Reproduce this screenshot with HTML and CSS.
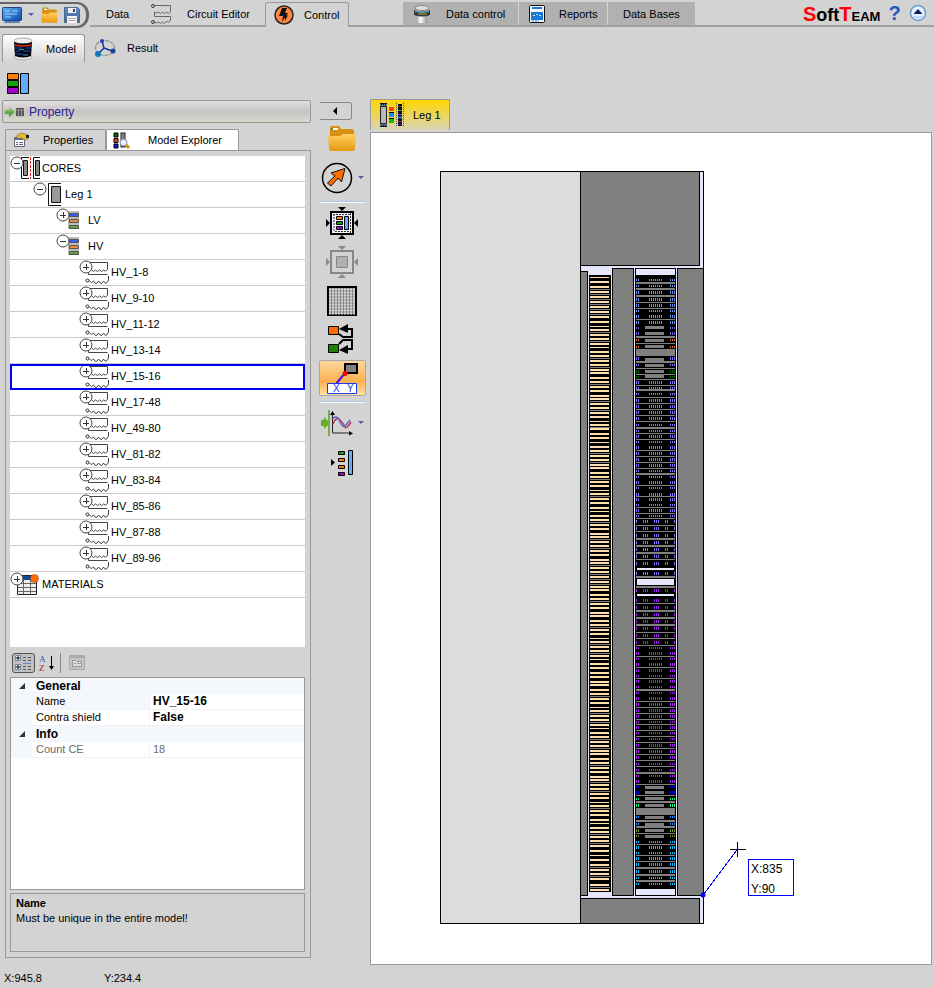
FILE: index.html
```html
<!DOCTYPE html>
<html lang="en">
<head>
<meta charset="utf-8">
<title>Transformer model</title>
<link rel="stylesheet" href="styles.css">
</head>
<body>
<svg class="defs" aria-hidden="true">
  <defs>
    <linearGradient id="gFolder" x1="0" y1="0" x2="0" y2="1"><stop offset="0" stop-color="#ffd060"/><stop offset="1" stop-color="#e59a10"/></linearGradient>
    <linearGradient id="gScreen" x1="0" y1="0" x2="1" y2="1"><stop offset="0" stop-color="#5ab4f4"/><stop offset="1" stop-color="#1248a8"/></linearGradient>
    <linearGradient id="gDisk" x1="0" y1="0" x2="0" y2="1"><stop offset="0" stop-color="#5c8cc8"/><stop offset="1" stop-color="#48648c"/></linearGradient>
    <linearGradient id="gSteel"><stop offset="0" stop-color="#888"/><stop offset=".4" stop-color="#fff"/><stop offset="1" stop-color="#777"/></linearGradient>
    <linearGradient id="gArrow" x1="0" y1="0" x2="0" y2="1"><stop offset="0" stop-color="#9cd070"/><stop offset="1" stop-color="#3f8c1c"/></linearGradient>
    <symbol id="minus" viewBox="0 0 14 14"><circle cx="7" cy="7" r="6" fill="#fff" stroke="#444"/><path d="M4 7.500h6" stroke="#333"/></symbol>
    <symbol id="plus" viewBox="0 0 14 14"><circle cx="7" cy="7" r="6" fill="#fff" stroke="#444"/><path d="M4 7.500h6M7.500 4v6" stroke="#333"/></symbol>
    <symbol id="folder" viewBox="0 0 28 28"><path d="M2 3q0-2 2-2h7l2 3h11q2 0 2 2v8H2z" fill="#d89010"/><rect x="3" y="3" width="7" height="2" fill="#fff"/><rect x="3" y="3" width="2" height="2" fill="#28a070"/><path d="M0 11h12l3-2h13l-1 15q0 2-2 2H3q-2 0-2-2z" fill="url(#gFolder)"/></symbol>
    <symbol id="winding" viewBox="0 0 31 24"><path d="M11 2.500H28.500V9.500q-2 3-4 .5q-2 3-4 0q-2 3-4 0q-2 3-4 0M9.500 11V14.500H28.500M29.500 16V20q-2.500 6-5 1q-2.500 5-5 0q-2.500 5-5 0q-2 3-4 0" fill="none" stroke="#444"/><circle cx="8.500" cy="20.500" r="1.500" fill="#fff" stroke="#222"/><use href="#plus" width="14" height="14"/></symbol>
    <symbol id="bars" viewBox="0 0 31 24"><rect x="12" y="3" width="11" height="18" fill="#bbb"/><path d="M13.500 5.500h9v3h-9z" fill="#3c5cf0" stroke="#555"/><path d="M13.500 11.500h9v3h-9z" fill="#f08c40" stroke="#555"/><path d="M13.500 17.500h9v3h-9z" fill="#5ca040" stroke="#555"/></symbol>
    <symbol id="drop" viewBox="0 0 6 4"><path d="M0 0h6L3 3z" fill="#5560a8"/></symbol>
  </defs>
</svg>

<header class="ribbon">
  <div class="quick">
    <button aria-label="View"><svg width="20" height="20"><rect x="0.500" y="2.500" width="19" height="13" rx="1" fill="url(#gScreen)" stroke="#1c4484"/><path d="M3 6h5M3 9h12M3 12h6M10 6h6" stroke="#a0d8ff"/><path d="M3 16h14l1 2H2z" fill="#5c80b0"/></svg></button>
    <button aria-label="View options"><svg width="6" height="4"><use href="#drop"/></svg></button>
    <button class="folder-btn" aria-label="Open"><svg width="17" height="17"><use href="#folder"/></svg></button>
    <button aria-label="Save"><svg width="16" height="17"><path d="M.5.500h13l2 2v13H.5z" fill="url(#gDisk)" stroke="#4a6890"/><path d="M4 1h8v5H4z" fill="#eee"/><path d="M9 2h2v3H9z" fill="#446"/><path d="M3 9h10v7H3z" fill="#f4f4f4"/><path d="M4 11.500h8M4 13.500h8" stroke="#aaa"/></svg></button>
  </div>
  <nav class="tabs">
    <a class="tab data" href="#">Data</a>
    <a class="tab circuit" href="#"><svg width="22" height="20"><path d="M3 1.500H19.500V8q-2 3-4 0q-2 3-4 0q-2 3-4 0q-2 2-4 0V12.500H19.500V16q-2 4-4 1q-2 4-4 1q-2 3-4 0q-2 2-4 0" fill="none" stroke="#666"/><circle cx="2" cy="2" r="1.500" fill="#ddd" stroke="#333"/><circle cx="2" cy="18" r="1.500" fill="#ddd" stroke="#333"/></svg>Circuit Editor</a>
    <a class="tab control active" href="#"><svg width="20" height="20"><circle cx="10" cy="10" r="9" fill="#ff8840" stroke="#222" stroke-width="1.500"/><path d="M8 3h5l-2 5h3l-6 9 1-6H5z" fill="#111"/><path d="M11 11l3-1-3 6z" fill="#111"/></svg>Control</a>
    <a class="tab alt datac" href="#"><svg width="18" height="20"><path d="M4 6h10v12l2 1H2l2-1z" fill="url(#gSteel)"/><ellipse cx="9" cy="4" rx="7" ry="2.500" fill="#ddd" stroke="#888"/><path d="M1 6q8 3 16 0v5q-8 3-16 0z" fill="#2c3c44"/><path d="M2 7.500q7 2 14 0" stroke="#50b8c8" fill="none"/><path d="M5 10h9" stroke="#e09030"/></svg>Data control</a>
    <a class="tab alt reports" href="#"><svg width="17" height="20"><rect x=".5" y="1.500" width="15" height="17" rx="1" fill="#f4f4f4" stroke="#111"/><path d="M3 3h10v2H3zM2 8h12v8H2z" fill="#1878d8"/><path d="M4 11.500h2m1-1h2m1 1h2" stroke="#d0e8ff"/><path d="M3 17h7" stroke="#1878d8" stroke-dasharray="2 1"/></svg>Reports</a>
    <a class="tab alt bases" href="#">Data Bases</a>
  </nav>
  <div class="brand">
    <svg class="logo" width="77" height="24" role="img" aria-label="SoftTeam"><text x="0" y="20"><tspan class="logo-red">S</tspan><tspan class="logo-oft">oft</tspan><tspan class="logo-red">T</tspan><tspan class="logo-eam">EAM</tspan></text></svg>
    <button class="help" aria-label="Help">?</button>
    <button aria-label="Collapse ribbon"><svg width="18" height="18"><circle cx="9" cy="9" r="7.500" fill="#e4f4ff" stroke="#6c98c8" stroke-width="1.500"/><path d="M9 5l4.500 5h-9z" fill="#102060"/><path d="M4 12q5 3 10 0" fill="none" stroke="#b0d8f4" stroke-width="2"/></svg></button>
  </div>
</header>

<nav class="subtabs">
  <a class="subtab active" href="#"><svg width="24" height="24"><ellipse cx="12" cy="4" rx="9" ry="3" fill="#eee" stroke="#aaa"/><ellipse cx="12" cy="20" rx="9" ry="3" fill="#eee" stroke="#aaa"/><path d="M3 5q9 3 18 0l-1 14q-8 3-16 0z" fill="#050510"/><path d="M4 8q8 2 16 0" stroke="#e02818" fill="none" stroke-width="1.500"/><path d="M4 11h7m4 0h5M5 14h4m3 0h7M4 17h8" stroke="#1850c0"/><path d="M8 12.500h5M12 18h5" stroke="#20a0c0"/></svg>Model</a>
  <a class="subtab" href="#"><svg width="22" height="20"><ellipse cx="11" cy="10" rx="9.500" ry="7.500" fill="none" stroke="#999" stroke-width="1.500" stroke-dasharray="4 1"/><path d="M8 3l2 7-6 6M10 10l8 3" stroke="#1838a0" fill="none" stroke-width="1.500"/><circle cx="8" cy="3" r="2" fill="#2040c0"/><circle cx="4" cy="16" r="3" fill="#1878b8"/><circle cx="19" cy="13" r="2.500" fill="#2040a0"/></svg>Result</a>
</nav>

<div class="commands">
  <button aria-label="Build model"><svg width="24" height="23"><path d="M1.500 1.500h11v6h-11z" fill="#ff8000" stroke="#000"/><path d="M1.500 8.500h11v6h-11z" fill="#10a010" stroke="#000"/><path d="M1.500 15.500h11v6h-11z" fill="#a000c8" stroke="#000"/><path d="M14.500 1.500h8v20h-8z" fill="#64acff" stroke="#000"/></svg></button>
</div>

<main class="workspace">
  <aside class="side">
    <h2 class="side-title"><svg width="20" height="12"><path d="M0 4h4V1l6 5-6 5V8H0z" fill="url(#gArrow)"/><path d="M11 2h8v8h-8z" fill="#555"/><path d="M11 4h8M13.500 4v7M16.500 4v7" stroke="#999"/></svg>Property</h2>
    <nav class="side-tabs">
      <a class="side-tab" href="#"><svg width="18" height="17"><path d="M2.500 5.500h10v9h-10z" fill="#fff" stroke="#667"/><path d="M3 6h9v2H3z" fill="#4868b8"/><path d="M4 10.500h2m1 0h4M4 12.500h2m1 0h4" stroke="#668"/><path d="M5 3l5-2 6 2v4l-4 1-3-2-4 1z" fill="#e0bc30" stroke="#665510" stroke-width=".5"/><path d="M14 3h3v3h-3z" fill="#222"/></svg>Properties</a>
      <a class="side-tab active" href="#"><svg width="18" height="17"><rect x="8" y="1" width="4" height="14" fill="#888" stroke="#222"/><path d="M1 1h4v4H1z" fill="#106010" stroke="#000"/><path d="M1 6.500h4v4H1z" fill="#f04020" stroke="#000"/><path d="M1 12h4v4H1z" fill="#1010f0" stroke="#000"/><circle cx="10.500" cy="10.500" r="3.500" fill="#e4f0ff" stroke="#889"/><path d="M13 13l3 3" stroke="#d09018" stroke-width="3"/></svg>Model Explorer</a>
    </nav>
    <section class="side-body">
      <ul class="tree">
        <li><button class="node l0"><svg width="31" height="24"><path d="M19 1.500h-7.500v21H19M30 1.500h-6.500v21H30" stroke="#111" fill="none"/><path d="M13.500 4.500h4v15h-4zM25.500 4.500h4v15h-4z" fill="#888" stroke="#111"/><path d="M20.500 1v22" stroke="#e02020" stroke-dasharray="3 1"/><use href="#minus" width="14" height="14"/></svg>CORES</button></li>
        <li><button class="node l1"><svg width="31" height="24"><path d="M28 1.500H15.500v22H28" stroke="#111" fill="none"/><path d="M18.500 4.500h9v16h-9z" fill="#999" stroke="#111"/><use href="#minus" width="14" height="14"/></svg>Leg 1</button></li>
        <li><button class="node l2"><svg width="31" height="24"><use href="#bars" width="31" height="24"/><use href="#plus" width="14" height="14"/></svg>LV</button></li>
        <li><button class="node l2"><svg width="31" height="24"><use href="#bars" width="31" height="24"/><use href="#minus" width="14" height="14"/></svg>HV</button></li>
        <li><button class="node l3"><svg width="31" height="24"><use href="#winding"/></svg>HV_1-8</button></li>
        <li><button class="node l3"><svg width="31" height="24"><use href="#winding"/></svg>HV_9-10</button></li>
        <li><button class="node l3"><svg width="31" height="24"><use href="#winding"/></svg>HV_11-12</button></li>
        <li><button class="node l3"><svg width="31" height="24"><use href="#winding"/></svg>HV_13-14</button></li>
        <li class="selected"><button class="node l3"><svg width="31" height="24"><use href="#winding"/></svg>HV_15-16</button></li>
        <li><button class="node l3"><svg width="31" height="24"><use href="#winding"/></svg>HV_17-48</button></li>
        <li><button class="node l3"><svg width="31" height="24"><use href="#winding"/></svg>HV_49-80</button></li>
        <li><button class="node l3"><svg width="31" height="24"><use href="#winding"/></svg>HV_81-82</button></li>
        <li><button class="node l3"><svg width="31" height="24"><use href="#winding"/></svg>HV_83-84</button></li>
        <li><button class="node l3"><svg width="31" height="24"><use href="#winding"/></svg>HV_85-86</button></li>
        <li><button class="node l3"><svg width="31" height="24"><use href="#winding"/></svg>HV_87-88</button></li>
        <li><button class="node l3"><svg width="31" height="24"><use href="#winding"/></svg>HV_89-96</button></li>
        <li><button class="node l0"><svg width="31" height="24"><path d="M7.500 3.500h19v19h-19z" fill="#eee" stroke="#222"/><path d="M8 4h18v4H8z" fill="#184890"/><path d="M8 11.500h18M8 15.500h18M8 19.500h18M13.500 8v14M20.500 8v14" stroke="#666"/><circle cx="24.500" cy="6.500" r="4" fill="#ff6c00" stroke="#a04010" stroke-width=".5"/><use href="#plus" width="14" height="14"/></svg>MATERIALS</button></li>
      </ul>
      <div class="grid-tools">
        <button class="pressed" aria-label="Categorized"><svg width="21" height="18"><path d="M2.500 1.500h5v5h-5zM2.500 10.500h5v5h-5z" fill="#fff" stroke="#68a"/><path d="M3 4h4M5 2v4M3 13h4M5 11v4" stroke="#000"/><path d="M10 3.500h3m2 0h3M10 6.500h3m2 0h3M10 12.500h3m2 0h3M10 15.500h3m2 0h3" stroke="#555"/><path d="M10 9.500h8" stroke="#68c"/></svg></button>
        <button aria-label="Sort alphabetically"><svg width="18" height="18"><text x="1" y="8" class="az-a">A</text><text x="1" y="17" class="az-z">Z</text><path d="M13.500 2v13" stroke="#000"/><path d="M11 12h5l-2.500 4z"/></svg></button>
        <i class="sep"></i>
        <button aria-label="Property pages" disabled><svg width="16" height="16"><path d="M.5.500h15v14H.5z" fill="#c4c4c4" stroke="#aaa"/><path d="M0 2h16" stroke="#aaa" stroke-width="2"/><path d="M3.500 5.500h3l1 1h5v5h-9z" fill="#ddd" stroke="#999"/><path d="M5 8.500h2m1 0h4" stroke="#999"/></svg></button>
      </div>
      <div class="props">
        <table>
          <colgroup><col class="c-mark"><col class="c-key"><col></colgroup>
          <tbody>
            <tr class="group"><td class="mark"><svg width="6" height="6"><path d="M6 0v6H0z" fill="#333"/></svg></td><th colspan="2">General</th></tr>
            <tr><td class="mark"></td><td class="key current">Name</td><td class="val">HV_15-16</td></tr>
            <tr><td class="mark"></td><td class="key">Contra shield</td><td class="val">False</td></tr>
            <tr class="group"><td class="mark"><svg width="6" height="6"><path d="M6 0v6H0z" fill="#333"/></svg></td><th colspan="2">Info</th></tr>
            <tr class="readonly"><td class="mark"></td><td class="key">Count CE</td><td class="val">18</td></tr>
          </tbody>
        </table>
      </div>
      <div class="hint"><strong>Name</strong><p>Must be unique in the entire model!</p></div>
    </section>
  </aside>

  <div class="tools">
    <button class="fold" aria-label="Collapse panel"><svg width="4" height="8"><path d="M4 0v8L0 4z"/></svg></button>
    <button class="t-open" aria-label="Open"><svg width="28" height="28"><use href="#folder"/></svg></button>
    <button class="t-row t-point" aria-label="Select"><svg width="32" height="32"><circle cx="16" cy="16" r="14.500" fill="none" stroke="#000" stroke-width="1.500"/><path d="M24 6.500L20.500 20l-3.500-4-7 8-3.500-3 7.500-7-4-3z" fill="#ff6c00" stroke="#111"/></svg><svg width="6" height="4"><use href="#drop"/></svg></button>
    <i class="rule"></i>
    <button class="t-fit" aria-label="Fit model"><svg width="34" height="34"><path d="M6 6h22v22H6z" fill="#f0f0ff" stroke="#000" stroke-width="2"/><path d="M9 8v18M25.500 7v20M8 8.500h18M10 25.500h16" stroke="#333" stroke-dasharray="2 1"/><path d="M11.500 10.500h6v3h-6z" fill="#ff8000" stroke="#000"/><path d="M11.500 15.500h6v3h-6z" fill="#10a010" stroke="#000"/><path d="M11.500 20.500h6v3h-6z" fill="#a000c8" stroke="#000"/><path d="M19.500 10.500h4v13h-4z" fill="#64acff" stroke="#000"/><path d="M13 1h8l-4 4zM13 33h8l-4-4zM1 13v8l4-4zM33 13v8l-4-4z"/></svg></button>
    <button class="t-zone" aria-label="Fit selection" disabled><svg width="34" height="34"><path d="M6 6h22v22H6z" fill="#d3d3d3" stroke="#888" stroke-width="2"/><path d="M11.500 11.500h11v11h-11z" fill="#b0b0b0" stroke="#888"/><path d="M13 1h8l-4 4zM13 33h8l-4-4zM1 13v8l4-4zM33 13v8l-4-4z" fill="#888"/></svg></button>
    <button class="t-grid" aria-label="Grid"><svg width="30" height="30"><path d="M1 1h28v28H1z" fill="#888" stroke="#000" stroke-width="2"/><path d="M2 3.500h26M2 6.500h26M2 9.500h26M2 12.500h26M2 15.500h26M2 18.500h26M2 21.500h26M2 24.500h26M2 27.500h26" stroke="#ddd" stroke-width="2" stroke-dasharray="2 1"/></svg></button>
    <button class="t-swap" aria-label="Swap"><svg width="28" height="32"><path d="M1.500 3.500h10v8h-10z" fill="#ff6c00" stroke="#000"/><path d="M1.500 21.500h10v8h-10z" fill="#208000" stroke="#000"/><path d="M12 11l4 3h9V6h-5M12 21l4-4h9v9h-5" fill="none" stroke="#000" stroke-width="2"/><path d="M12 6l9-5v9zM12 27l9-5v9z"/></svg></button>
    <button class="t-coord on" aria-label="Show coordinates"><svg width="32" height="32"><path d="M18 2h12v9H18z" fill="#808080" stroke="#000" stroke-width="2"/><path d="M9 22l9-11" stroke="#5010e0" stroke-width="2"/><circle cx="18" cy="11.500" r="2.500" fill="#f00"/><path d="M.5 21.500h29v10H.5z" fill="#fff" stroke="#1838f0"/><text x="6" y="30" class="xy">X</text><text x="20" y="30" class="xy">Y</text></svg></button>
    <i class="rule"></i>
    <button class="t-row t-plot" aria-label="Plots"><svg width="32" height="28"><path d="M0 11h3V8l6 6-6 6v-3H0z" fill="#60b028"/><path d="M8 1v26" stroke="#78a850" stroke-width="2"/><path d="M11.500 3v21H30" stroke="#222" fill="none"/><path d="M9 6l2.500-4L14 6zM28 22l4 2.500-4 2z"/><path d="M12 15q3-8 7-4t5 7t6-5" fill="none" stroke="#c03050" stroke-width="1.500"/><path d="M12 9q5-3 7 4q3 7 6 3t4-5" fill="none" stroke="#5070c0" stroke-width="1.500"/></svg><svg width="6" height="4"><use href="#drop"/></svg></button>
    <button class="t-list" aria-label="Insert element"><svg width="24" height="27"><path d="M1 10l4 3.500L1 17z"/><path d="M8.500 2.500h6v3h-6z" fill="#10a010" stroke="#000"/><path d="M8.500 9.500h6v3h-6z" fill="#ff8000" stroke="#000"/><path d="M8.500 16.500h6v3h-6z" fill="#ff8000" stroke="#000"/><path d="M8.500 23.500h6v3h-6z" fill="#a000c8" stroke="#000"/><path d="M18.500 1.500h4v24h-4z" fill="#64acff" stroke="#000"/></svg></button>
  </div>

  <section class="view">
    <nav class="view-tabs"><a class="view-tab" href="#"><svg width="26" height="24"><path d="M1.500 3.500h6v17h-6z" fill="#b8b8b8" stroke="#222"/><path d="M1 1h7M1 23h7" stroke="#111" stroke-width="3"/><path d="M1 1.500h7M1 22.500h7" stroke="#3c90e0" stroke-dasharray="1 1"/><path d="M10 4h5v4h-5z" fill="#ff4010"/><path d="M10 10h5v4h-5z" fill="#1090ff"/><path d="M10 16h5v4h-5z" fill="#18b818"/><path d="M10 9.500h5M10 15.500h5" stroke="#000"/><path d="M17.500 0v24M24.500 0v24" stroke="#555" stroke-dasharray="1 1"/><path d="M19 1h4v22h-4z" fill="#111"/><path d="M19 3.500h4" stroke="#803030"/><path d="M19 7.500h4" stroke="#30a030"/><path d="M19 14.500h4" stroke="#2080f0" stroke-width="2"/><path d="M19 18.500h4" stroke="#c020a0"/><path d="M19 11.500h4" stroke="#8040e0"/><path d="M19 21.500h4" stroke="#2020f0"/></svg>Leg 1</a></nav>
    <div class="canvas">
      <svg class="drawing" width="360" height="753" viewBox="440 171 360 753" shape-rendering="crispEdges" role="img" aria-label="Core window with LV and HV windings">
        <rect x="440" y="171" width="264" height="753" fill="#000"/>
        <rect x="441" y="172" width="139" height="751" fill="#dcdcdc"/>
        <rect x="581" y="172" width="122" height="751" fill="#e6e6fa"/>
        <rect x="581" y="172" width="119" height="94" fill="#000"/><rect x="581" y="172" width="118" height="93" fill="#808080"/>
        <rect x="581" y="898" width="119" height="25" fill="#000"/><rect x="581" y="899" width="118" height="24" fill="#808080"/>
        <rect x="581" y="271" width="7" height="625" fill="#000"/><rect x="581" y="272" width="6" height="623" fill="#808080"/>
        <rect x="612" y="268" width="22" height="628" fill="#000"/><rect x="613" y="269" width="20" height="626" fill="#808080"/>
        <rect x="677" y="268" width="26" height="628" fill="#000"/><rect x="678" y="269" width="25" height="626" fill="#808080"/>
        <rect x="589" y="275" width="22" height="617" fill="#000"/>
        <rect x="635" y="268" width="41" height="628" fill="#000"/>
        <rect x="636" y="269" width="39" height="6" fill="#e6e6fa"/><rect x="636" y="889" width="39" height="6" fill="#e6e6fa"/>
        <g id="lv"></g>
        <g id="hv"></g>
        <path d="M703 895L737 850" stroke="#0000ff" fill="none"/>
        <circle cx="703" cy="895" r="2.500" fill="#0000ff" shape-rendering="auto"/>
        <path d="M730 849.500h16M737.500 842v15" stroke="#000" fill="none"/>
        <rect x="748.500" y="859.500" width="45" height="36" fill="#fff" stroke="#0000ff"/>
        <text x="751" y="873" class="coord">X:835</text><text x="751" y="893" class="coord">Y:90</text>
      </svg>
    </div>
  </section>
</main>

<footer class="status"><span>X:945.8</span><span>Y:234.4</span></footer>
<script src="windings.js"></script>
</body>
</html>
```
FILE: styles.css
```css
* { box-sizing: border-box; }
body {
  margin: 0;
  min-height: 100vh;
  display: flex;
  flex-direction: column;
  background: #d3d3d3;
  color: #000;
  font: 11px/16px "Liberation Sans", Arial, sans-serif;
}
svg { display: block; flex: none; }
button {
  margin: 0;
  padding: 0;
  border: 0;
  background: none;
  font: inherit;
  color: inherit;
}
a { color: inherit; text-decoration: none; }
.defs { position: absolute; width: 0; height: 0; }

.ribbon { display: flex; height: 28px; }
.quick {
  width: 89px;
  margin: 2px 0 0;
  padding: 0 6px 0 2px;
  display: flex;
  align-items: center;
  justify-content: space-between;
  border: 2px solid #666;
  border-right-width: 3px;
  border-left: 0;
  border-radius: 0 12px 12px 0;
}
.tabs {
  flex: 1;
  display: flex;
  align-items: stretch;
  height: 27px;
  padding-top: 2px;
  margin-left: 1px;
  border-bottom: 2px solid #a0a0a0;
}
.tab { display: flex; align-items: center; white-space: nowrap; }
.data { padding: 0 16px; width: 61px; }
.circuit { width: 114px; gap: 14px; }
.control {
  width: 84px;
  padding-left: 8px;
  gap: 10px;
  margin-bottom: -2px;
  background: #d3d3d3;
  border: 1px solid #999;
  border-bottom: 0;
  border-radius: 3px 3px 0 0;
}
.alt { background: #b1b1b1; border-right: 1px solid #d3d3d3; }
.datac { margin-left: 54px; width: 116px; padding-left: 10px; gap: 15px; }
.reports { width: 89px; padding-left: 10px; gap: 13px; }
.bases { width: 87px; padding-left: 15px; border-right: 0; }
.brand {
  display: flex;
  align-items: center;
  gap: 6px;
  padding-right: 7px;
  height: 27px;
  border-bottom: 2px solid #a0a0a0;
}
.logo text { font-family: "Liberation Sans", Arial, sans-serif; font-weight: bold; }
.logo .logo-red { font-size: 20px; fill: #f00; }
.logo .logo-oft { font-size: 18px; }
.logo .logo-eam { font-size: 13px; }
.help { width: 17px; color: #2458c0; font-weight: bold; font-size: 20px; line-height: 20px; }

.subtabs { display: flex; margin: 6px 0 0 2px; height: 28px; }
.subtab { width: 83px; padding-left: 9px; gap: 11px; display: flex; align-items: center; }
.subtab.active {
  padding-left: 8px;
  border: 1px solid #999;
  border-bottom: 0;
  border-radius: 3px 3px 0 0;
  background: linear-gradient(#ffffff, #d3d3d3);
}
.commands { padding: 10px 6px 5px; height: 37px; }

.workspace { flex: 1; display: flex; min-height: 0; }
.side { width: 311px; display: flex; flex-direction: column; }
.side-title {
  margin: 1px 0 0 2px;
  height: 23px;
  padding-left: 2px;
  display: flex;
  align-items: center;
  gap: 4px;
  border: 1px solid #999;
  border-radius: 2px;
  background: linear-gradient(#e4dfdc, #c4c4c4 50%, #d8dacc);
  font-weight: normal;
  font-size: 12px;
  color: #302090;
}
.side-tabs { display: flex; margin: 6px 0 0 5px; }
.side-tab {
  height: 21px;
  width: 101px;
  padding-left: 6px;
  display: flex;
  align-items: center;
  gap: 13px;
  border: 1px solid #999;
  border-bottom: 0;
  border-radius: 2px 2px 0 0;
}
.side-tab.active { width: 133px; gap: 17px; background: #fff; }
.side-body {
  flex: 1;
  margin-left: 5px;
  padding: 5px;
  border: 1px solid #999;
  display: flex;
  flex-direction: column;
}
.tree { list-style: none; margin: 0 0 0 -1px; padding: 0; flex: 0 0 491px; background: #fff; }
.tree li { height: 26px; border-bottom: 1px solid #ccc; }
.tree .selected { outline: 2px solid #0000f0; outline-offset: -2px; border-color: transparent; }
.node { display: flex; align-items: center; width: 100%; height: 24px; white-space: nowrap; text-align: left; gap: 1px; }
.l1 { padding-left: 23px; }
.l2 { padding-left: 46px; }
.l3 { padding-left: 69px; }
.grid-tools { display: flex; align-items: center; gap: 3px; height: 30px; margin-top: 1px; }
.pressed { border: 1px solid #555; border-radius: 3px; background: #c0c0c0; margin-left: 1px; }
.sep { width: 1px; height: 20px; background: #888; margin: 0 5px 0 1px; }
.az-a { font: 9px "Liberation Serif", serif; fill: #2848b0; }
.az-z { font: 9px "Liberation Serif", serif; fill: #a02020; }
.props { margin: -1px 0 0 -1px; flex: 1; border: 1px solid #999; background: #fff; }
.props table { width: 100%; border-spacing: 0; table-layout: fixed; }
.props td, .props th { height: 16px; padding: 0; line-height: 15px; text-align: left; }
.c-mark { width: 21px; }
.c-key { width: 118px; }
.group, .mark { background: #f4f7fc; }
.mark svg { margin-left: 8px; }
.props th { padding-left: 4px; font-size: 12px; }
.props .key { padding-left: 4px; border-right: 1px solid #f0f2f8; border-bottom: 1px solid #f0f2f8; }
.current { background: #f4f7fc; }
.props .val { padding-left: 3px; font-weight: bold; font-size: 12px; border-bottom: 1px solid #f0f2f8; }
.props .readonly { color: #6d6d6d; }
.props .readonly .val { font-weight: normal; font-size: 11px; }
.hint { margin: 3px 0 0 -1px; height: 59px; padding: 1px 5px; border: 1px solid #999; }
.hint strong { display: block; line-height: 16px; }
.hint p { margin: 0; line-height: 15px; }

.tools { width: 59px; padding-left: 8px; display: flex; flex-direction: column; align-items: flex-start; }
.fold {
  width: 32px;
  height: 18px;
  margin: 3px 0 5px 1px;
  padding-left: 13px;
  border: 1px solid #888;
  border-left: 0;
  border-radius: 0 3px 3px 0;
}
.t-open { margin-left: 9px; }
.t-row { display: flex; align-items: center; gap: 5px; }
.t-point { margin: 9px 0 7px 2px; }
.rule { width: 43px; height: 2px; margin-left: 2px; background: #9cc8f4; border-bottom: 1px solid #fff; }
.t-fit { margin: 3px 0 0 6px; }
.t-zone { margin: 5px 0 0 6px; }
.t-grid { margin: 7px 0 0 8px; }
.t-swap { margin: 7px 0 5px 8px; }
.t-coord { width: 47px; height: 36px; margin-bottom: 5px; padding-left: 7px; border: 1px solid #a8a8a8; border-radius: 2px; background: linear-gradient(#fcd8a0, #fcb050 60%, #ffe0a0); }
.t-plot { margin: 6px 0 12px 2px; }
.t-list { margin-left: 11px; }
.xy { font: 10px "Liberation Sans", Arial, sans-serif; fill: #2040e0; }

.view { flex: 1; display: flex; flex-direction: column; padding-right: 2px; }
.view-tabs { height: 33px; }
.view-tab {
  width: 80px;
  height: 31px;
  padding-left: 8px;
  display: flex;
  align-items: center;
  gap: 8px;
  border: 1px solid #999;
  border-bottom: 0;
  background: linear-gradient(#ffd700, #d8d4b8);
}
.canvas { flex: 1; margin-bottom: -7px; padding: 38px 0 38px 69px; border: 1px solid #999; background: #fff; }
.coord { font: 12px "Liberation Sans", Arial, sans-serif; }

.status { height: 30px; padding: 12px 4px 0; display: flex; gap: 62px; line-height: 16px; }
```
FILE: windings.js
```js
const NS = "http://www.w3.org/2000/svg";
const lv = document.getElementById("lv");
const hv = document.getElementById("hv");

function bar(parent, x, y, w, h, fill) {
  const r = document.createElementNS(NS, "rect");
  r.setAttribute("x", x);
  r.setAttribute("y", y);
  r.setAttribute("width", w);
  r.setAttribute("height", h);
  r.setAttribute("fill", fill);
  parent.appendChild(r);
}

// LV discs: y of each conductor; a minus sign marks a thin one.
const lvDiscs = [-277, 281, 286, 291, 296, 301, 306, 311, 316, 321, -326, 329, 334, 338, 343, -347, 351, 355, 360, 364,
  369, 372, 377, 381, 386, 390, 395, 398, 403, 407, 412, 416, -421, 424, 428, 433, 437, -442, 446, 450, 455, 459, 464,
  467, 472, 476, 481, 485, -490, 493, 498, 502, 507, -511, 515, 519, 524, 528, 533, 536, 541, 545, 550, 554, 559, 562,
  567, 571, 576, 581, 586, 589, 594, 598, 603, 607, 612, 615, 620, 624, 629, 633, -638, 641, 646, 650, 655, -659, 663,
  667, 672, 676, 681, 684, 689, 693, 698, 702, -707, 710, 715, 719, 724, -728, 732, 736, 741, 745, 750, 753, 758, 762,
  767, 771, 776, 779, 784, 788, 793, 797, -802, 805, 810, 814, 819, -823, 827, 831, 836, 840, 845, 850, -855, 859, 864,
  869, 873, 878, 884, 889];
const lvSpacers = [289, 294, 299, 304, 309, 314, 332, 341, 358, 367, 384, 401, 410, 427, 453, 462, 479, 496, 522, 539,
  548, 565, 574, 579, 584, 601, 627, 644, 653, 696, 713, 722, 739, 748, 765, 782, 791, 808, 834, 843, 867, 876, 887];
lvDiscs.forEach(y => bar(lv, 590, Math.abs(y), 19, y < 0 ? 1 : 2, "#ffdead"));
lvSpacers.forEach(y => bar(lv, 590, y, 20, 1, "#808080"));

// HV strand layouts, as x positions of the strands of one disc.
const full = [636, 638, 649, 651, 653, 655, 657, 659, 661, 670, 672, 674];
const split = [636, 643, 645, 647, 654, 656, 658, 665, 667, 674];
const ends = [636, 638, 670, 672, 674];

function discs(layout, fill, rows) {
  rows.forEach(([y, h]) => layout.forEach(x => bar(hv, x, y, 1, h, fill)));
}
const tall = ys => ys.map(y => [y, 3]);
const low = ys => ys.map(y => [y, 2]);

discs(full, "#6495ed", [...low([279, 285, 310]), ...tall([291, 298, 304, 315, 321])]);
discs(full, "#8470ff", [...low([387, 393, 424, 430, 441, 470, 476, 487, 504, 515]),
  ...tall([381, 399, 405, 411, 417, 435, 446, 452, 458, 464, 481, 493, 498, 509])]);
discs(split, "#8470ff", tall([520, 527, 534, 541, 548, 555, 562, 572]));
discs(split, "#a020f0", tall([589, 599, 606, 613, 620, 627, 634, 641]));
discs(full, "#a020f0", [...low([647, 658, 675, 686, 692, 721, 732, 738, 763, 769, 775]),
  ...tall([652, 663, 669, 680, 697, 703, 709, 715, 726, 744, 750, 756, 780])]);
discs(full, "#00bfff", [...low([841, 852, 877, 883]), ...tall([846, 857, 863, 870])]);

discs(ends, "#6a5acd", [[327, 2], [332, 3]]);
discs(ends, "#d2691e", [[339, 2], [346, 2]]);
discs(ends, "#8470ff", [[357, 3], [364, 2]]);
discs(ends, "#006400", [[370, 3], [376, 2]]);
discs(ends, "#0000cd", [[786, 2], [791, 3]]);
discs(ends, "#00ff7f", [[798, 2], [804, 3]]);
discs(ends, "#1e90ff", [[816, 2], [823, 2]]);
discs(ends, "#6b8e23", [[829, 3], [835, 2]]);
[326, 332, 339, 345, 358, 364, 370, 375, 786, 791, 797, 804, 816, 823, 829, 835]
  .forEach(y => bar(hv, 645, y, 19, 3, "#808080"));

[302, 308, 319, 343, 368, 374, 379, 385, 397, 403, 409, 415, 421, 433, 439, 450, 456, 462, 468, 485, 496, 507, 513, 518,
  525, 531, 559, 603, 632, 638, 645, 656, 667, 678, 701, 707, 713, 719, 724, 730, 736, 742, 748, 754, 760, 766, 784, 795,
  833, 844, 855, 861].forEach(y => bar(hv, 636, y, 39, 1, "#808080"));
[282, 288, 295, 336, 361, 389, 427, 473, 538, 545, 552, 576, 586, 610, 617, 624, 689, 772, 801, 820, 826, 867, 874, 880]
  .forEach(y => bar(hv, 636, y, 39, 2, "#808080"));
[349, 808].forEach(y => bar(hv, 636, y, 39, 7, "#808080"));
[[568, 2], [579, 6], [594, 2]].forEach(([y, h]) => bar(hv, 637, y, 37, h, "#e6e6fa"));
```
